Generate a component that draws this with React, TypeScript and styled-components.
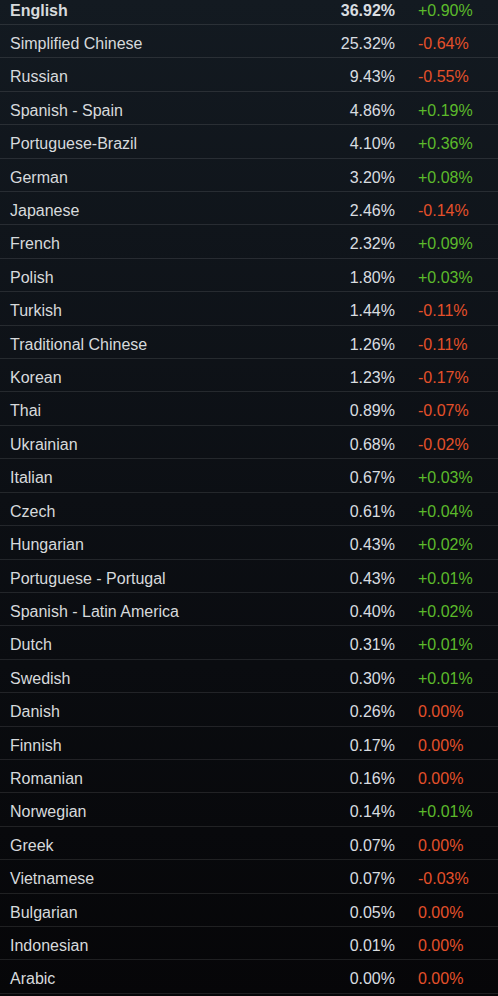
import styled, { createGlobalStyle } from 'styled-components';

const Global = createGlobalStyle`
  html, body {
    margin: 0;
    height: 100%;
  }
  body {
    background: linear-gradient(180deg, #131a21 0%, #0c0f14 50%, #060608 100%);
    font-family: 'Liberation Sans', Arial, sans-serif;
    overflow: hidden;
  }
`;

const Table = styled.div`
  margin-top: -8.4px;
  width: 498px;
`;

const Row = styled.div<{ $top?: boolean }>`
  display: grid;
  grid-template-columns: 1fr auto 80px;
  column-gap: 23px;
  padding: 10px 0 4px 10px;
  border-bottom: 1px solid rgba(255, 255, 255, 0.1);
  font-size: 16px;
  line-height: 18.4px;
  color: #d7dadc;
  font-weight: ${(p) => (p.$top ? 700 : 400)};
`;

const Name = styled.span`
  white-space: nowrap;
`;

const Share = styled.span`
  text-align: right;
  color: #d9dde0;
`;

const Change = styled.span<{ $up: boolean }>`
  font-weight: 400;
  color: ${(p) => (p.$up ? '#5cba2b' : '#e4502a')};
`;

const languages = [
  { name: 'English', share: '36.92%', change: '+0.90%' },
  { name: 'Simplified Chinese', share: '25.32%', change: '-0.64%' },
  { name: 'Russian', share: '9.43%', change: '-0.55%' },
  { name: 'Spanish - Spain', share: '4.86%', change: '+0.19%' },
  { name: 'Portuguese-Brazil', share: '4.10%', change: '+0.36%' },
  { name: 'German', share: '3.20%', change: '+0.08%' },
  { name: 'Japanese', share: '2.46%', change: '-0.14%' },
  { name: 'French', share: '2.32%', change: '+0.09%' },
  { name: 'Polish', share: '1.80%', change: '+0.03%' },
  { name: 'Turkish', share: '1.44%', change: '-0.11%' },
  { name: 'Traditional Chinese', share: '1.26%', change: '-0.11%' },
  { name: 'Korean', share: '1.23%', change: '-0.17%' },
  { name: 'Thai', share: '0.89%', change: '-0.07%' },
  { name: 'Ukrainian', share: '0.68%', change: '-0.02%' },
  { name: 'Italian', share: '0.67%', change: '+0.03%' },
  { name: 'Czech', share: '0.61%', change: '+0.04%' },
  { name: 'Hungarian', share: '0.43%', change: '+0.02%' },
  { name: 'Portuguese - Portugal', share: '0.43%', change: '+0.01%' },
  { name: 'Spanish - Latin America', share: '0.40%', change: '+0.02%' },
  { name: 'Dutch', share: '0.31%', change: '+0.01%' },
  { name: 'Swedish', share: '0.30%', change: '+0.01%' },
  { name: 'Danish', share: '0.26%', change: '0.00%' },
  { name: 'Finnish', share: '0.17%', change: '0.00%' },
  { name: 'Romanian', share: '0.16%', change: '0.00%' },
  { name: 'Norwegian', share: '0.14%', change: '+0.01%' },
  { name: 'Greek', share: '0.07%', change: '0.00%' },
  { name: 'Vietnamese', share: '0.07%', change: '-0.03%' },
  { name: 'Bulgarian', share: '0.05%', change: '0.00%' },
  { name: 'Indonesian', share: '0.01%', change: '0.00%' },
  { name: 'Arabic', share: '0.00%', change: '0.00%' },
];

export default function App() {
  return (
    <>
      <Global />
      <Table>
        {languages.map((lang, i) => (
          <Row key={lang.name} $top={i === 0}>
            <Name>{lang.name}</Name>
            <Share>{lang.share}</Share>
            <Change $up={lang.change.startsWith('+')}>{lang.change}</Change>
          </Row>
        ))}
      </Table>
    </>
  );
}
